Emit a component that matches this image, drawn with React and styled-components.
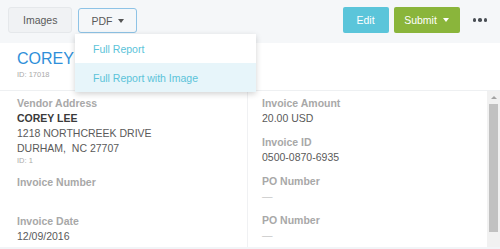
import React from "react";
import styled, { createGlobalStyle } from "styled-components";

const Global = createGlobalStyle`
  html, body { margin: 0; padding: 0; background: #f3f5f8; }
  body { font-family: "Liberation Sans", Arial, sans-serif; font-size: 10.5px; }
  * { box-sizing: border-box; }
`;

const Page = styled.div`
  width: 500px;
  height: 249px;
  display: flex;
  flex-direction: column;
  background: #f2f4f7;
  overflow: hidden;
`;

const Toolbar = styled.div`
  height: 43px;
  flex: none;
  display: flex;
  align-items: flex-start;
  padding: 7px 13px 0 8px;
  background: #f5f7f9;
  position: relative;
`;

const Group = styled.div`
  display: flex;
  align-items: center;
  gap: ${(p) => p.$gap || 0}px;
  margin-left: ${(p) => (p.$right ? "auto" : "0")};
`;

const GhostButton = styled.button`
  height: ${(p) => (p.$active ? 25 : 26)}px;
  margin-top: ${(p) => (p.$active ? 1 : 0)}px;
  padding: 0 ${(p) => p.$px || 13}px;
  font: inherit;
  font-size: 10.5px;
  color: #5a5a5a;
  background: ${(p) => (p.$active ? "#f5f7f9" : "#f0f2f4")};
  border: 1px solid ${(p) => (p.$active ? "#8ec3e6" : "#e5e8eb")};
  border-radius: 3px;
  display: flex;
  align-items: center;
  gap: 6px;
`;

const SolidButton = styled.button`
  height: 26px;
  width: ${(p) => p.$w}px;
  padding: 0;
  font: inherit;
  font-size: 10.5px;
  color: #fff;
  background: ${(p) => p.$bg};
  border: none;
  border-radius: 2px;
  display: flex;
  align-items: center;
  justify-content: center;
  gap: 6px;
`;

const Caret = styled.span`
  width: 0;
  height: 0;
  border-left: 3.5px solid transparent;
  border-right: 3.5px solid transparent;
  border-top: 4px solid ${(p) => p.$color || "#555"};
`;

const Dots = styled.div`
  display: flex;
  gap: 2px;
  margin-left: 8px;
  height: 26px;
  align-items: center;
`;

const Dot = styled.span`
  width: 3.5px;
  height: 3.5px;
  border-radius: 50%;
  background: #4a4f55;
`;

const Menu = styled.div`
  position: absolute;
  left: 75px;
  top: 34px;
  width: 181px;
  background: #fff;
  box-shadow: 0 2px 6px rgba(0, 0, 0, 0.18);
  z-index: 10;
`;

const MenuItem = styled.div`
  height: 29px;
  padding-left: 18px;
  display: flex;
  align-items: center;
  color: #5bc3d9;
  font-size: 10.5px;
  background: ${(p) => (p.$hover ? "#e7f5fa" : "#fff")};
`;

const Header = styled.div`
  flex: none;
  background: #fff;
  padding: 7px 17px 0;
  height: 48px;
  border-bottom: 1px solid #eef0f2;
`;

const Title = styled.div`
  font-size: 16px;
  line-height: 18px;
  color: #2f8fd9;
`;

const TinyId = styled.div`
  font-size: 7.5px;
  line-height: 10px;
  color: #aaa;
  margin-top: ${(p) => p.$mt || 0}px;
`;

const Body = styled.div`
  flex: none;
  height: 156px;
  display: flex;
  background: #fff;
`;

const Column = styled.div`
  width: ${(p) => p.$w}px;
  padding: 5px 0 0 ${(p) => p.$pl}px;
  border-right: ${(p) => (p.$divider ? "1px solid #f0f1f3" : "none")};
  display: flex;
  flex-direction: column;
  gap: 9px;
`;

const Field = styled.div`
  display: flex;
  flex-direction: column;
`;

const Label = styled.div`
  font-weight: bold;
  color: #a8a8a8;
  line-height: 15px;
`;

const Value = styled.div`
  color: ${(p) => (p.$strong ? "#3a3a3a" : p.$empty ? "#c9c9c9" : "#5a5a5a")};
  font-weight: ${(p) => (p.$strong ? "bold" : "normal")};
  line-height: 15px;
  min-height: 15px;
`;

const Scrollbar = styled.div`
  margin-left: auto;
  width: 13px;
  background: #f1f1f1;
  display: flex;
  flex-direction: column;
  align-items: center;
  padding-top: 5px;
`;

const ScrollArrow = styled.span`
  width: 0;
  height: 0;
  border-left: 3px solid transparent;
  border-right: 3px solid transparent;
  border-bottom: 3px solid #a3a3a3;
`;

const Thumb = styled.div`
  margin-top: 5px;
  width: 9px;
  height: 128px;
  background: #c1c1c1;
`;

const fieldsRight = [
  ["Invoice Amount", "20.00 USD"],
  ["Invoice ID", "0500-0870-6935"],
  ["PO Number", "—", true],
  ["PO Number", "—", true],
];

export default function App() {
  return (
    <Page>
      <Global />
      <Toolbar>
        <Group $gap={6}>
          <GhostButton $px={14}>Images</GhostButton>
          <GhostButton $active $px={12}>
            PDF <Caret />
          </GhostButton>
        </Group>
        <Group $right $gap={5}>
          <SolidButton $bg="#5bc5da" $w={46}>Edit</SolidButton>
          <SolidButton $bg="#8ab53b" $w={66}>
            Submit <Caret $color="#fff" />
          </SolidButton>
          <Dots>
            <Dot />
            <Dot />
            <Dot />
          </Dots>
        </Group>
        <Menu>
          <MenuItem>Full Report</MenuItem>
          <MenuItem $hover>Full Report with Image</MenuItem>
        </Menu>
      </Toolbar>
      <Header>
        <Title>COREY</Title>
        <TinyId $mt={2}>ID: 17018</TinyId>
      </Header>
      <Body>
        <Column $w={248} $pl={17} $divider>
          <Field>
            <Label>Vendor Address</Label>
            <Value $strong>COREY LEE</Value>
            <Value>1218 NORTHCREEK DRIVE</Value>
            <Value>DURHAM,&nbsp; NC 27707</Value>
            <TinyId>ID: 1</TinyId>
          </Field>
          <Field>
            <Label>Invoice Number</Label>
            <Value />
          </Field>
          <Field>
            <Label>Invoice Date</Label>
            <Value>12/09/2016</Value>
          </Field>
        </Column>
        <Column $w={239} $pl={14}>
          {fieldsRight.map(([l, v, e], i) => (
            <Field key={i}>
              <Label>{l}</Label>
              <Value $empty={e}>{v}</Value>
            </Field>
          ))}
        </Column>
        <Scrollbar>
          <ScrollArrow />
          <Thumb />
        </Scrollbar>
      </Body>
    </Page>
  );
}
